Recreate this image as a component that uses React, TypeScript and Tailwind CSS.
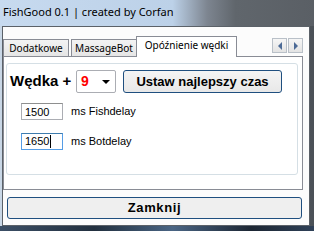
import { useState } from 'react';

const sans = { fontFamily: '"Liberation Sans", Arial, sans-serif' };

function TabArrows() {
  return (
    <div className="flex gap-[1px] mb-[3px] mr-[6px]">
      <div className="w-[15px] h-[15px] border border-[#b9c0c8] bg-[linear-gradient(#f6f6f6,#e3e3e3)] flex items-center justify-center">
        <div className="w-0 h-0 border-y-[4px] border-y-transparent border-r-[4px] border-r-[#4c6a96]" />
      </div>
      <div className="w-[15px] h-[15px] border border-[#b9c0c8] bg-[linear-gradient(#f6f6f6,#e3e3e3)] flex items-center justify-center">
        <div className="w-0 h-0 border-y-[4px] border-y-transparent border-l-[4px] border-l-[#4c6a96]" />
      </div>
    </div>
  );
}

export default function App() {
  const [fish, setFish] = useState('1500');
  const [bot, setBot] = useState('1650');

  return (
    <div className="w-[314px] h-[231px] overflow-hidden flex flex-col bg-[linear-gradient(90deg,#c9d7e6_0%,#b9c9da_60%,#5d646b_72%,#4b5157_100%)]">
      {/* Title bar */}
      <div
        className="h-[26px] shrink-0 flex items-center pl-[3px] pb-[1px] text-[11px] text-black bg-[linear-gradient(90deg,#c7daef_0%,#bcd1e8_55%,#7d8590_66%,#60666c_75%,#5a5f65_100%)]"
        style={{ fontFamily: '"Noto Sans", "Open Sans", sans-serif' }}
      >
        FishGood 0.1 | created by Corfan
      </div>

      <div className="flex flex-1">
        <div className="w-[2px]" />
        {/* Client area */}
        <div className="w-[308px] h-[200px] border border-[#5b6168] bg-[#fcfcfc] flex flex-col" style={sans}>
          {/* Tab strip */}
          <div className="flex items-end h-[29px]" style={{ fontFamily: '"Noto Sans", sans-serif' }}>
            <div className="w-[66px] h-[17px] flex items-center justify-center text-[10px] border border-b-0 border-[#898c95] bg-[linear-gradient(#f3f3f3,#e5e5e5)] mr-[2px]">
              Dodatkowe
            </div>
            <div className="w-[66px] h-[17px] flex items-center justify-center text-[10px] border border-b-0 border-[#898c95] bg-[linear-gradient(#f3f3f3,#e5e5e5)] -mr-[1px]">
              MassageBot
            </div>
            <div className="w-[101px] h-[21px] pb-[4px] flex items-center justify-center text-[10px] border border-b-0 border-[#898c95] bg-white relative z-10 -mb-[1px]">
              Opóźnienie wędki
            </div>
            <div className="flex-1" />
            <TabArrows />
          </div>

          {/* Tab page */}
          <div className="w-[300px] h-[134px] border border-[#898c95] bg-white pt-[6px] pl-[2px]">
            <div className="w-[292px] h-[112px] border border-[#d5dfe5] rounded-[3px] bg-white pl-[3px] pt-[6px]">
              <div className="flex items-center">
                <span className="text-[15px] font-bold text-black w-[66px]">Wędka +</span>
                <div className="w-[40px] h-[23px] border border-[#abadb3] rounded-[2px] bg-white flex items-center justify-between pl-[4px] pr-[5px]">
                  <span className="text-[14px] font-bold text-[#ff0000]">9</span>
                  <div className="w-0 h-0 border-x-[4px] border-x-transparent border-t-[4px] border-t-black" />
                </div>
                <button className="ml-[7px] w-[159px] h-[23px] border border-[#1f4f7f] rounded-[3px] bg-[linear-gradient(#f4f4f4,#e8e8e8)] text-[13px] font-bold text-black">
                  Ustaw najlepszy czas
                </button>
              </div>

              <div className="flex items-center mt-[10px] ml-[11px]">
                <input
                  value={fish}
                  onChange={(e) => setFish(e.target.value)}
                  className="w-[42px] h-[17px] border border-[#abadb3] border-t-[#8e8f8f] px-[3px] text-[11px] text-black outline-none"
                />
                <span className="ml-[8px] text-[11px] text-black">ms Fishdelay</span>
              </div>

              <div className="flex items-center mt-[13px] ml-[11px]">
                <div className="w-[42px] h-[17px] border border-[#569de5] border-t-[#3d7bad] px-[3px] flex items-center text-[11px] text-black bg-white">
                  {bot}
                  <span className="w-[1px] h-[13px] bg-black ml-[1px]" />
                </div>
                <span className="ml-[8px] text-[11px] text-black">ms Botdelay</span>
              </div>
            </div>
          </div>

          {/* Close button */}
          <button
            onClick={() => setBot(bot)}
            className="mt-[7px] ml-[4px] w-[295px] h-[22px] border border-[#1f4f7f] rounded-[3px] bg-[#efefef] text-[13px] font-bold tracking-[0.6px] text-black"
          >
            Zamknij
          </button>
        </div>
        <div className="flex-1" />
      </div>

      <div className="h-[5px] shrink-0 bg-[linear-gradient(90deg,#3c4f66,#22303f_30%,#4a6584_55%,#1c2633_80%,#2f4158)]" />
    </div>
  );
}
